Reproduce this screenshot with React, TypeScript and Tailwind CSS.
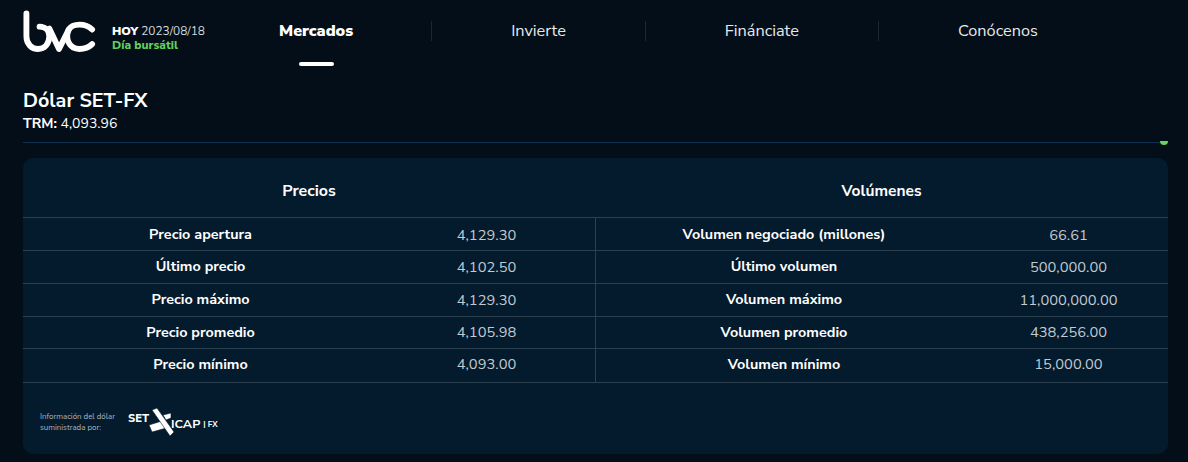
const rows = [
  ["Precio apertura", "4,129.30", "Volumen negociado (millones)", "66.61"],
  ["Último precio", "4,102.50", "Último volumen", "500,000.00"],
  ["Precio máximo", "4,129.30", "Volumen máximo", "11,000,000.00"],
  ["Precio promedio", "4,105.98", "Volumen promedio", "438,256.00"],
  ["Precio mínimo", "4,093.00", "Volumen mínimo", "15,000.00"],
];
const heights = ["h-[33px]", "h-[33px]", "h-[33px]", "h-[32px]", "h-[34px]"];
const nudges = ["pt-[2px]", "", "", "", "pb-[2px]"];
const navItems = ["Mercados", "Invierte", "Fin\u00e1nciate", "Conócenos"];

function Logo() {
  return (
    <svg width="74" height="43" viewBox="0 0 76 44" fill="none" stroke="#fff" strokeWidth="6" strokeLinecap="round" strokeLinejoin="round">
      <path d="M3.500 3.500V27C3.500 35 9 40 15.500 40C22 40 27 35 27 27C27 21 23 17 17 17" />
      <path d="M27 19L37 40L47 20C49.500 16 54 15 58 15C64 15 68 17 71 20" />
      <path d="M47 20C43 29 47 40 58 40C64 40 68 38 71 35" />
    </svg>
  );
}

function IcapMark() {
  return (
    <svg width="26" height="28" viewBox="0 0 26 28" fill="#fff" stroke="#041b2d" strokeWidth="0.6" className="shrink-0">
      <polygon points="0,17 16,12 21,19 3,24" />
      <polygon points="14,7 22,5 22,10 17,12" />
      <polygon points="3,2 8,0 25,24 21,28" />
    </svg>
  );
}

export default function App() {
  return (
    <div className="w-[1188px] h-[462px] overflow-hidden bg-[#030e18] text-white font-['Nunito_Sans','Open_Sans','Noto_Sans',sans-serif]">
      <header className="flex h-[62px] items-start">
        <div className="ml-[23px] mt-[10px]"><Logo /></div>
        <div className="ml-[15px] mt-[24px] w-[94px] whitespace-nowrap text-[11.900px] leading-[14px]">
          <div><b className="font-black">HOY</b> <span className="text-[#d5dadd]">2023/08/18</span></div>
          <div className="font-extrabold text-[#62cf5e]">Día bursátil</div>
        </div>
        <nav className="ml-[-5px] flex pt-[21px]">
          {navItems.map((item, i) => (
            <div key={item} className={i === 0
              ? "relative flex h-[20px] items-center justify-center border-r border-[#1d2731] px-[78px]"
              : "flex h-[20px] items-center justify-center border-r border-[#1d2731] px-[79px] last:border-r-0"}>
              <span className={i === 0 ? "text-[16px] font-black" : "text-[16.300px] text-[#e6eaec]"}>{item}</span>
              {i === 0 && <span className="absolute top-[41px] h-[4px] w-[35px] rounded-full bg-white" />}
            </div>
          ))}
        </nav>
      </header>
      <div className="px-[23px] pt-[27px]">
        <h1 className="text-[19.700px] leading-[24px] font-bold">Dólar SET-FX</h1>
        <p className="mt-[1px] text-[14px] leading-[19px]"><b className="font-bold">TRM:</b> 4,093.96</p>
        <div className="relative mt-[9px] h-[1px] w-[1145px] bg-[#12304f]">
          <span className="absolute right-0 top-[-1px] h-[4px] w-[8px] rounded-b-sm bg-[#6ad35f]" />
        </div>
        <section className="mt-[15px] h-[296px] w-[1145px] rounded-[10px] bg-[#041b2d]">
          <div className="grid h-[60px] grid-cols-[572px_1fr] items-center border-b border-[#2c4050] pt-[6px] font-bold">
            <div className="text-center text-[16px]">Precios</div>
            <div className="text-center text-[15.500px]">Volúmenes</div>
          </div>
          {rows.map((r, i) => (
            <div key={r[0]} className={`grid grid-cols-[355px_218px_376px_1fr] items-center border-b border-[#2c4050] text-[14.400px] ${heights[i]}`}>
              <div className={`text-center font-bold ${nudges[i]}`}>{r[0]}</div>
              <div className={`flex h-full items-center justify-center border-r border-[#2c4050] text-[14.700px] text-[#c3cad0] ${nudges[i]}`}>{r[1]}</div>
              <div className={`text-center font-bold ${nudges[i]}`}>{r[2]}</div>
              <div className={`pr-[3px] text-center text-[14.700px] text-[#c3cad0] ${nudges[i]}`}>{r[3]}</div>
            </div>
          ))}
          <div className="flex items-center pl-[17px] pt-[25px]">
            <div className="w-[88px] text-[7.900px] leading-[11.500px] text-[#aab5bd]">Información del dólar<br />suministrada por:</div>
            <div className="flex items-center font-bold">
              <span className="mb-[5px] text-[11.200px] font-extrabold">SET</span>
              <IcapMark />
              <span className="ml-[-4px] mt-[5px] text-[12.500px] font-bold">ICAP</span>
              <span className="ml-[3px] mt-[5px] text-[8px]">| FX</span>
            </div>
          </div>
        </section>
      </div>
    </div>
  );
}
